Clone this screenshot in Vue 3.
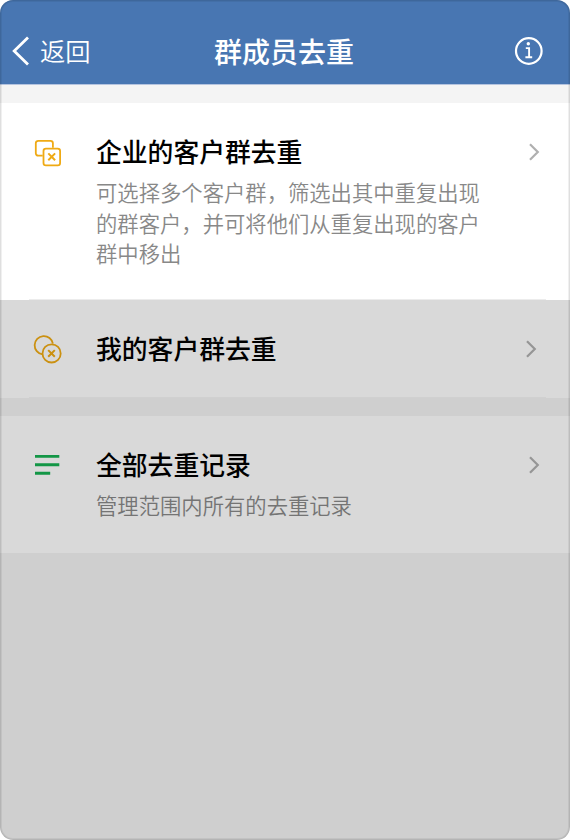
<script setup>
const groups = [
  {
    id: 'dedupe',
    rows: [
      {
        icon: 'squares',
        title: '企业的客户群去重',
        lines: ['可选择多个客户群，筛选出其中重复出现', '的群客户，并可将他们从重复出现的客户', '群中移出'],
      },
      { icon: 'circles', title: '我的客户群去重', lines: [], dimmed: true },
    ],
  },
  {
    id: 'records',
    rows: [{ icon: 'list', title: '全部去重记录', lines: ['管理范围内所有的去重记录'], dimmed: true }],
  },
]
</script>

<template>
  <div class="screen">
    <header class="navbar">
      <div class="back">
        <svg class="back-icon" width="18" height="30" viewBox="0 0 18 30">
          <path d="M16 1.5 2.2 15 16 28.5" fill="none" stroke="#fff" stroke-width="2.8" />
        </svg>
        <span class="back-label">返回</span>
      </div>
      <h1 class="navbar-title">群成员去重</h1>
      <svg class="info" width="30" height="30" viewBox="0 0 30 30">
        <circle cx="14.8" cy="15" r="12.8" fill="none" stroke="#fff" stroke-width="2.2" />
        <circle cx="14.3" cy="7.8" r="1.7" fill="#fff" />
        <path d="M11.8 12.1h3.3v9M11.4 21.3h6.8" fill="none" stroke="#fff" stroke-width="1.9" />
      </svg>
    </header>
    <main>
      <section v-for="group in groups" :key="group.id" class="group" :class="group.id">
        <div v-for="row in group.rows" :key="row.title" class="row" :class="[row.icon, { dimmed: row.dimmed }]">
          <svg v-if="row.icon === 'squares'" class="icon" width="30" height="30" viewBox="0 0 30 30" fill="none" stroke="#efaa14" stroke-width="1.8">
            <path d="M9.7 18.7H5.2A2.4 2.4 0 0 1 2.8 16.3V6.2A2.4 2.4 0 0 1 5.2 3.8h12.3a2.4 2.4 0 0 1 2.4 2.4v4.5" />
            <rect x="10.5" y="11.6" width="16.6" height="16.7" rx="2.4" />
            <path d="m15.3 16.4 6.8 6.8m0-6.8-6.8 6.8" stroke-width="2" />
          </svg>
          <svg v-else-if="row.icon === 'circles'" class="icon" width="30" height="30" viewBox="0 0 30 30" fill="none" stroke="#efaa14" stroke-width="1.8">
            <path d="M9.5 20.4A9.2 9.2 0 1 1 19.9 9.7" />
            <circle cx="18.6" cy="19.4" r="9.1" />
            <path d="m15.2 16.1 6.6 6.6m0-6.6-6.6 6.6" stroke-width="2" />
          </svg>
          <svg v-else class="icon" width="30" height="30" viewBox="0 0 30 30" fill="none" stroke="#16b152" stroke-width="2.9">
            <path d="M2 6.4h24.3M2 14.7h24.3M2 23.2h15.2" />
          </svg>
          <div class="copy">
            <h2 class="title">{{ row.title }}</h2>
            <p v-if="row.lines.length" class="desc">
              <span v-for="line in row.lines" :key="line" class="line">{{ line }}</span>
            </p>
          </div>
          <svg class="chevron" width="12" height="20" viewBox="0 0 12 20">
            <path d="m2 2.2 7.8 7.8L2 17.8" fill="none" stroke="#b0b0b0" stroke-width="2.2" />
          </svg>
        </div>
      </section>
    </main>
  </div>
</template>

<style>
body {
  margin: 0;
  background: #fff;
}
</style>

<style scoped>
.screen {
  position: relative;
  display: flex;
  flex-direction: column;
  width: 570px;
  height: 840px;
  overflow: hidden;
  border-radius: 13px;
  background: #cfcfcf;
  font-family: "Noto Sans CJK SC", sans-serif;
}
.screen::after {
  content: "";
  position: absolute;
  inset: 0;
  border-radius: 13px;
  box-shadow: inset 0 0 0 1px rgba(0, 0, 0, 0.07), inset 0 0 0 2px rgba(0, 0, 0, 0.06);
  pointer-events: none;
}
.navbar {
  display: grid;
  grid-template-columns: 1fr auto 1fr;
  align-items: center;
  box-sizing: border-box;
  height: 85px;
  flex: none;
  padding: 18px 26px 0 12px;
  border-bottom: 1px solid #b5c4df;
  background: #4876b2;
  color: #fff;
}
.back {
  display: flex;
  align-items: center;
  gap: 10px;
}
.back-label {
  margin-top: -3px;
  font-size: 25.3px;
  font-weight: 350;
  line-height: 36px;
}
.navbar-title {
  margin-left: 12px;
  margin-block: 0;
  font-size: 28px;
  font-weight: 500;
  line-height: 36px;
}
.info {
  justify-self: end;
}
.group {
  padding-top: 18px;
}
.group.dedupe {
  background: linear-gradient(#f4f4f4 18px, #fff 18px);
}
.row {
  display: flex;
  align-items: flex-start;
  box-sizing: border-box;
  padding: 30px 30px 0 33px;
  background: #fff;
}
.row.dimmed {
  background: #d9d9d9;
}
.row.squares {
  height: 197px;
  background: linear-gradient(#ececec, #ececec) 29px 100% / 517px 1px no-repeat, #fff;
}
.row.circles {
  height: 98px;
  padding-right: 33px;
  background: linear-gradient(#d0d0d0, #d0d0d0) 29px 100% / 517px 1px no-repeat, #d9d9d9;
}
.row.list {
  height: 137px;
}
.icon {
  flex: none;
  margin-top: 4px;
}
.dimmed .icon,
.dimmed .chevron {
  filter: brightness(0.85);
}
.copy {
  flex: 1;
  padding-left: 33px;
}
.title {
  margin: 0;
  color: #000;
  font-size: 25.8px;
  font-weight: 500;
  line-height: 36px;
  white-space: nowrap;
}
.desc {
  margin: 8px 0 0;
  color: #888;
  font-size: 21.33px;
  font-weight: 350;
  line-height: 30.7px;
  white-space: nowrap;
}
.dimmed .desc {
  color: #747474;
}
.line {
  display: block;
}
.chevron {
  flex: none;
  margin-top: 9px;
}
</style>
